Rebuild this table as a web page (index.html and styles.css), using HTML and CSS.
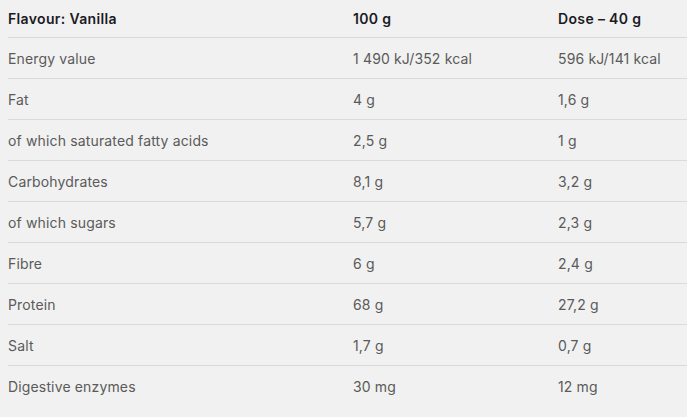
FILE: index.html
```html
<!DOCTYPE html>
<html>
<head>
<meta charset="utf-8">
<link rel="stylesheet" href="styles.css">
</head>
<body>
<div class="table">
  <div class="row head">
    <div class="cell">Flavour: Vanilla</div>
    <div class="cell">100 g</div>
    <div class="cell">Dose – 40 g</div>
  </div>
  <div class="row">
    <div class="cell">Energy value</div>
    <div class="cell">1 490 kJ/352 kcal</div>
    <div class="cell">596 kJ/141 kcal</div>
  </div>
  <div class="row">
    <div class="cell">Fat</div>
    <div class="cell">4 g</div>
    <div class="cell">1,6 g</div>
  </div>
  <div class="row">
    <div class="cell">of which saturated fatty acids</div>
    <div class="cell">2,5 g</div>
    <div class="cell">1 g</div>
  </div>
  <div class="row">
    <div class="cell">Carbohydrates</div>
    <div class="cell">8,1 g</div>
    <div class="cell">3,2 g</div>
  </div>
  <div class="row">
    <div class="cell">of which sugars</div>
    <div class="cell">5,7 g</div>
    <div class="cell">2,3 g</div>
  </div>
  <div class="row">
    <div class="cell">Fibre</div>
    <div class="cell">6 g</div>
    <div class="cell">2,4 g</div>
  </div>
  <div class="row">
    <div class="cell">Protein</div>
    <div class="cell">68 g</div>
    <div class="cell">27,2 g</div>
  </div>
  <div class="row">
    <div class="cell">Salt</div>
    <div class="cell">1,7 g</div>
    <div class="cell">0,7 g</div>
  </div>
  <div class="row last">
    <div class="cell">Digestive enzymes</div>
    <div class="cell">30 mg</div>
    <div class="cell">12 mg</div>
  </div>
</div>
</body>
</html>
```

FILE: styles.css
```css
html, body {
  margin: 0;
  padding: 0;
  background: #f1f1f1;
}
body {
  padding-left: 8px;
  font-family: "Inter", "Liberation Sans", sans-serif;
  font-size: 14px;
  color: #5a5a5a;
}
.table {
  display: flex;
  flex-direction: column;
}
.row {
  display: grid;
  grid-template-columns: 345px 205px 1fr;
  align-items: center;
  height: 40px;
  border-bottom: 1px solid #dadada;
  letter-spacing: 0.15px;
}
.row.head {
  height: 36px;
  padding-bottom: 1px;
  font-weight: 600;
  color: #1b1b25;
  letter-spacing: 0.35px;
}
.row.last {
  border-bottom: none;
}
.cell {
  white-space: nowrap;
}
```
